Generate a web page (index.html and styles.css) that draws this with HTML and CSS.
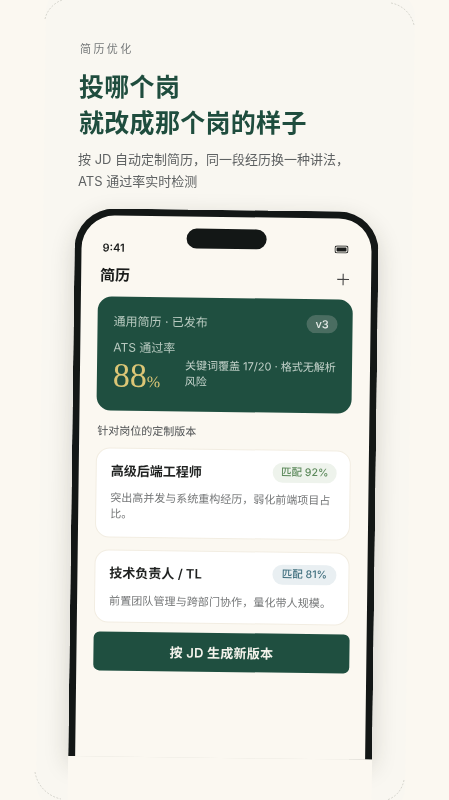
FILE: index.html
```html
<!DOCTYPE html>
<html lang="zh-CN">
<head>
<meta charset="utf-8">
<title>简历优化</title>
<link rel="stylesheet" href="styles.css">
</head>
<body>
<main class="page">
  <div class="sheet"></div>
  <svg class="corners" width="449" height="800" viewBox="0 0 449 800" fill="none">
    <path d="M45 19C47 10 54 3 62 0M391 3C402 5 411 13 414 25M35 772C37 785 47 796 61 799M404 780C402 790 396 797 387 800"/>
  </svg>
  <section class="hero">
    <p class="eyebrow">简历优化</p>
    <h1 class="headline">投哪个岗<br>就改成那个岗的样子</h1>
    <p class="lead">按 JD 自动定制简历，同一段经历换一种讲法，<br>ATS 通过率实时检测</p>
  </section>
  <section class="phone">
    <div class="frame">
      <div class="notch"></div>
      <div class="status">
        <span class="time">9:41</span>
        <svg class="battery" width="14" height="8" viewBox="0 0 14 8"><rect x=".5" y=".5" width="13" height="7" rx="2" fill="none" stroke="#1a1c1b"/><rect x="2" y="2" width="10" height="4" rx=".8" fill="#1a1c1b"/></svg>
      </div>
      <header class="topbar">
        <h2 class="screen-title">简历</h2>
        <svg class="plus" width="12" height="12" viewBox="0 0 12 12"><path d="M6 0v12M0 6h12" stroke="#444" stroke-width="1.1"/></svg>
      </header>
      <div class="score">
        <div class="score-head">
          <span>通用简历 · 已发布</span>
          <span class="version">v3</span>
        </div>
        <div class="ats-label">ATS 通过率</div>
        <div class="score-body">
          <div class="rate">88<small>%</small></div>
          <p class="score-note">关键词覆盖 17/20 · 格式无解析风险</p>
        </div>
      </div>
      <h3 class="section-label">针对岗位的定制版本</h3>
      <article class="job job-a">
        <div class="job-head">
          <h4>高级后端工程师</h4>
          <span class="match green">匹配 92%</span>
        </div>
        <p>突出高并发与系统重构经历，弱化前端项目占比。</p>
      </article>
      <article class="job job-b">
        <div class="job-head">
          <h4>技术负责人 / TL</h4>
          <span class="match blue">匹配 81%</span>
        </div>
        <p>前置团队管理与跨部门协作，量化带人规模。</p>
      </article>
      <button class="cta" type="button">按 JD 生成新版本</button>
    </div>
    <div class="chin"></div>
  </section>
</main>
</body>
</html>
```
FILE: styles.css
```css
* { box-sizing: border-box; }
html, body { margin: 0; padding: 0; }
body {
  background: #fbf8f1;
  font-family: "Inter", "Noto Sans CJK SC", sans-serif;
}
.page {
  position: relative;
  width: 449px;
  height: 800px;
  overflow: hidden;
  background: #fbf8f1;
  filter: blur(.3px);
}
.sheet {
  position: absolute;
  left: 41px;
  top: -10px;
  width: 369px;
  height: 820px;
  border-radius: 24px;
  background: #f9f7f1;
  transform: rotate(.72deg);
}
.corners {
  position: absolute;
  left: 0;
  top: 0;
}
.corners path {
  stroke: #c9c9c0;
  stroke-width: .7;
  stroke-dasharray: 2 1.5;
}
.hero {
  position: relative;
  padding: 42px 0 0 80px;
}
.eyebrow {
  margin: 0;
  font-size: 11px;
  line-height: 14px;
  letter-spacing: 2.4px;
  color: #76797a;
}
.headline {
  margin: 13px 0 0 -1px;
  font-size: 25px;
  line-height: 36px;
  font-weight: 600;
  letter-spacing: .3px;
  color: #1f4d3e;
}
.lead {
  margin: 7px 0 1px -2px;
  font-size: 13px;
  line-height: 22px;
  color: #5f6263;
  white-space: nowrap;
}
.phone {
  position: relative;
  width: 304px;
  height: 620px;
  margin: 18px 0 0 75px;
  transform: rotate(.72deg);
  transform-origin: 50% 0;
}
.frame {
  position: relative;
  height: 548px;
  padding: 0 16px;
  border: 7px solid #131716;
  border-bottom: 0;
  border-radius: 40px 40px 0 0;
  background: #fbf8f1;
  box-shadow: 0 8px 24px rgba(40, 40, 30, .18);
}
.chin {
  position: absolute;
  left: 0;
  top: 548px;
  width: 304px;
  height: 72px;
  background: #fbf8f1;
}
.notch {
  position: absolute;
  left: 105px;
  top: 12px;
  width: 80px;
  height: 20px;
  border-radius: 10px;
  background: #131716;
}
.status {
  display: flex;
  justify-content: space-between;
  align-items: flex-end;
  padding: 18px 0 0 5px;
  height: 39px;
}
.time {
  font-size: 11px;
  line-height: 14px;
  font-weight: 600;
  color: #1a1c1b;
}
.battery { margin-right: 7px; margin-bottom: 4px; }
.topbar {
  display: flex;
  justify-content: space-between;
  align-items: center;
  padding: 0 6px 0 3px;
  height: 24px;
  margin-top: 9px;
}
.screen-title {
  margin: 0;
  font-size: 15px;
  line-height: 20px;
  font-weight: 600;
  color: #1a1c1b;
}
.plus { margin-top: 1px; }
.score {
  margin: 9px 2px 0 1px;
  height: 114px;
  padding: 16px 15px 0 16px;
  border-radius: 14px;
  background: #1f4f40;
  color: #b7c9bf;
  font-size: 12px;
}
.score-head {
  display: flex;
  justify-content: space-between;
  align-items: center;
  line-height: 18px;
}
.version {
  width: 31px;
  height: 18px;
  border-radius: 9px;
  background: #4a6d61;
  color: #e8eee9;
  font-size: 11px;
  font-weight: 500;
  text-align: center;
}
.ats-label {
  margin-top: 8px;
  line-height: 18px;
}
.score-body {
  display: flex;
  gap: 13px;
  margin-top: 0;
}
.rate {
  flex: none;
  width: 59px;
  font-family: "Liberation Serif", serif;
  font-size: 34px;
  line-height: 38px;
  color: #dcc676;
}
.rate small { font-size: 16px; }
.score-note {
  margin: 0;
  font-size: 11px;
  line-height: 16px;
  color: #c3d2ca;
}
.section-label {
  margin: 12px 0 0 2px;
  font-size: 11px;
  line-height: 16px;
  font-weight: 400;
  color: #4d5052;
}
.job {
  margin: 9px 2px 0 1px;
  padding: 11px 13px 0 14px;
  border: 1px solid #f2ede2;
  border-radius: 14px;
  background: #fff;
}
.job-a { height: 90px; }
.job-b { height: 73px; margin-top: 12px; padding-right: 12px; }
.job-head {
  display: flex;
  justify-content: space-between;
  align-items: center;
  height: 22px;
}
.job h4 {
  margin: 0;
  font-size: 13px;
  line-height: 20px;
  font-weight: 600;
  color: #1f2120;
}
.match {
  width: 64px;
  height: 20px;
  border-radius: 10px;
  font-size: 10.5px;
  line-height: 20px;
  font-weight: 500;
  text-align: center;
}
.green { background: #eef3ec; color: #5d8a5c; }
.blue { background: #e9eff2; color: #41707f; }
.job p {
  margin: 8px -9px 0 0;
  font-size: 11px;
  line-height: 16px;
  color: #767879;
}
.job-b p { margin-top: 9px; letter-spacing: .1px; }
.cta {
  display: block;
  width: 256px;
  height: 39px;
  margin: 9px 0 0 1px;
  border: 0;
  border-radius: 6px;
  background: #1f4f40;
  color: #f4f3ec;
  font: 600 13px/39px "Inter", "Noto Sans CJK SC", sans-serif;
  letter-spacing: .2px;
}
```
